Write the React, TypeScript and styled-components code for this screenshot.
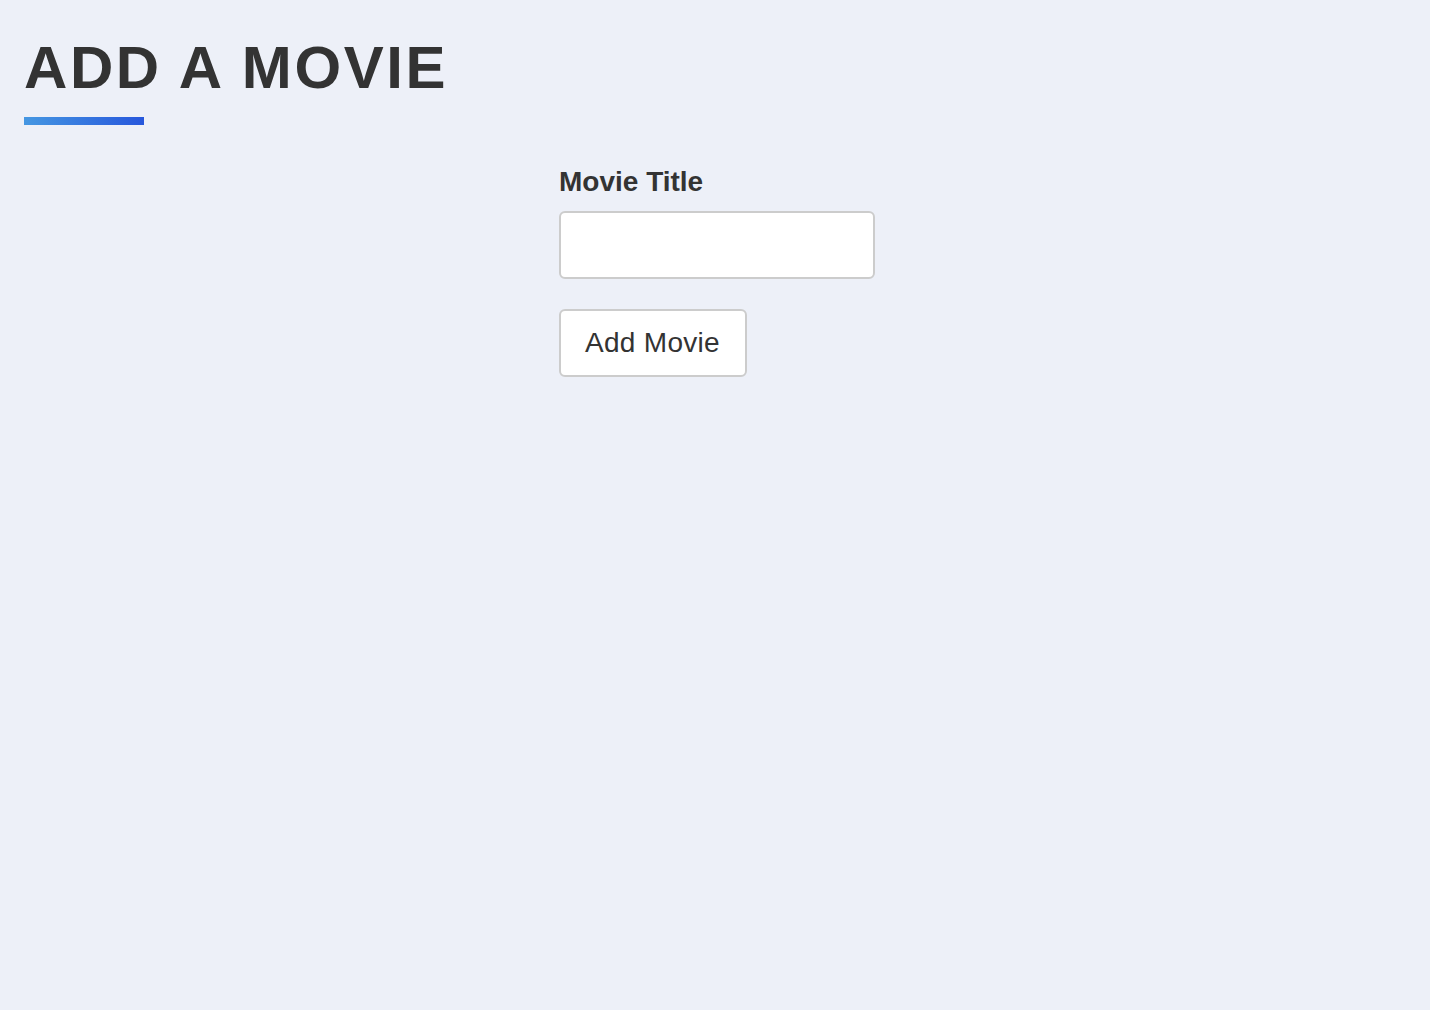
import styled, { createGlobalStyle } from 'styled-components';

const GlobalStyle = createGlobalStyle`
  * {
    box-sizing: border-box;
  }

  body {
    margin: 0;
    background-color: #edf0f8;
    color: #333333;
    font-family: 'Liberation Sans', Arial, Helvetica, sans-serif;
  }
`;

const Page = styled.main`
  min-height: 100vh;
  padding: 38px 24px 24px;
`;

const Header = styled.header`
  display: flex;
  flex-direction: column;
  align-items: flex-start;
`;

const Head = styled.h1`
  margin: 0;
  font-size: 60px;
  line-height: 1;
  font-weight: 700;
  letter-spacing: 2.6px;
  text-transform: uppercase;
`;

const Underline = styled.span`
  display: block;
  width: 120px;
  height: 8px;
  margin-top: 19px;
  background: linear-gradient(90deg, #4597e2, #2757dc);
`;

const Form = styled.form`
  display: flex;
  flex-direction: column;
  align-items: flex-start;
  width: 312px;
  margin: 41px auto 0;
`;

const Label = styled.label`
  font-size: 28px;
  font-weight: 700;
  margin-bottom: 13px;
`;

const Input = styled.input`
  width: 316px;
  height: 68px;
  padding: 0 16px;
  border: 2px solid #cccccc;
  border-radius: 6px;
  background-color: #ffffff;
  font-family: inherit;
  font-size: 28px;
  color: #333333;
  outline: none;
`;

const Button = styled.button`
  margin-top: 30px;
  height: 68px;
  padding: 0 25px 0 24px;
  border: 2px solid #cccccc;
  border-radius: 6px;
  background-color: #ffffff;
  font-family: inherit;
  font-size: 28px;
  letter-spacing: 0.3px;
  color: #333333;
  cursor: pointer;
`;

export default function App() {
  return (
    <>
      <GlobalStyle />
      <Page>
        <Header>
          <Head>Add a Movie</Head>
          <Underline />
        </Header>
        <Form onSubmit={e => e.preventDefault()}>
          <Label htmlFor="movie-title">Movie Title</Label>
          <Input id="movie-title" type="text" />
          <Button type="submit">Add Movie</Button>
        </Form>
      </Page>
    </>
  );
}
